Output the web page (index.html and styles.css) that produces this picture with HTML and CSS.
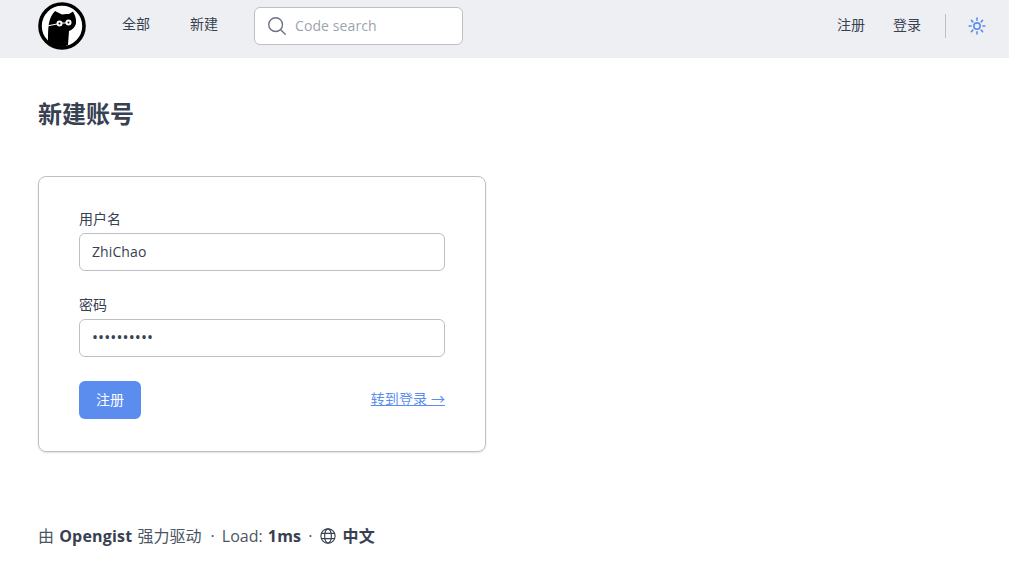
FILE: index.html
```html
<!DOCTYPE html>
<html lang="zh">
<head>
<meta charset="utf-8">
<title>新建账号</title>
<link rel="stylesheet" href="styles.css">
</head>
<body>
<header class="topbar">
  <div class="topbar-left">
    <a class="logo" href="#">
      <svg viewBox="0 0 48 48" width="48" height="48">
        <circle cx="24" cy="24" r="22" fill="#fff" stroke="#000" stroke-width="3.600"/>
        <path d="M10 41 C10 34 10 26 11 21 C12 16 14 12 17 9 L24 12.500 C27 12 30 12 31 12 L35 9.500 C37 13 38.500 17 38 21 C37.500 25 34 28 31 29 L30 43 C24 46 15 45 10 41 Z" fill="#000"/>
        <path d="M9 24 L19 22 M24 21 L28 21" stroke="#fff" stroke-width="1.200" fill="none"/>
        <circle cx="21.500" cy="21.500" r="3" fill="#fff"/>
        <circle cx="30.500" cy="20.500" r="3" fill="#fff"/>
        <circle cx="21.500" cy="21.500" r="1" fill="#000"/>
        <circle cx="30.500" cy="20.500" r="1" fill="#000"/>
      </svg>
    </a>
    <nav class="nav">
      <a href="#">全部</a>
      <a href="#">新建</a>
    </nav>
    <label class="search">
      <svg class="search-icon" viewBox="0 0 24 24" width="22" height="22" fill="none" stroke="#6b7280" stroke-width="1.500" stroke-linecap="round"><circle cx="10.500" cy="10.500" r="7.500"/><path d="M16 16 L21 21"/></svg>
      <input type="text" placeholder="Code search">
    </label>
  </div>
  <div class="topbar-right">
    <a href="#">注册</a>
    <a href="#">登录</a>
    <span class="divider"></span>
    <svg class="sun" viewBox="0 0 24 24" width="20" height="20" fill="none" stroke="#5b8def" stroke-width="1.900" stroke-linecap="round"><circle cx="12" cy="12" r="3.800"/><path d="M12 2.500v2.500M12 19v2.500M2.500 12H5M19 12h2.500M5.300 5.300L7 7M17 17l1.700 1.700M5.300 18.700L7 17M17 7l1.700-1.700"/></svg>
  </div>
</header>
<main class="page">
  <h1 class="title">新建账号</h1>
  <form class="card">
    <div class="field">
      <label class="field-label">用户名</label>
      <input class="field-input" type="text" value="ZhiChao">
    </div>
    <div class="field field-last">
      <label class="field-label">密码</label>
      <input class="field-input field-password" type="password" value="1234567890">
    </div>
    <div class="actions">
      <button class="btn" type="button">注册</button>
      <a class="link" href="#">转到登录 →</a>
    </div>
  </form>
</main>
<footer class="footer">
  <span>由 <b>Opengist</b> 强力驱动</span>
  <span class="dot">·</span>
  <span>Load: <b>1ms</b></span>
  <span class="dot dot-second">·</span>
  <svg class="globe" viewBox="0 0 24 24" width="18" height="18" fill="none" stroke="#374151" stroke-width="1.500"><circle cx="12" cy="12" r="9.500"/><ellipse cx="12" cy="12" rx="4.500" ry="9.500"/><path d="M3.200 8.500h17.600M3.200 15.500h17.600"/></svg>
  <b>中文</b>
</footer>
</body>
</html>
```
FILE: styles.css
```css
* { box-sizing: border-box; }
html, body { margin: 0; padding: 0; }
body {
  font-family: "Open Sans", "Noto Sans CJK SC", sans-serif;
  color: #374151;
  background: #fff;
}
a { color: inherit; text-decoration: none; }
.topbar {
  height: 58px;
  background: #eeeff2;
  display: flex;
  justify-content: space-between;
  align-items: flex-start;
  padding: 0 22px 0 38px;
}
.topbar-left { display: flex; align-items: flex-start; }
.logo { display: flex; margin-top: 2px; }
.nav { display: flex; gap: 40px; margin: 14px 0 0 36px; font-size: 14px; line-height: 20px; color: #374151; }
.search {
  display: flex;
  align-items: center;
  gap: 7px;
  width: 209px;
  height: 38px;
  margin: 7px 0 0 36px;
  padding-left: 11px;
  background: #fff;
  border: 1px solid #bdbfc7;
  border-radius: 6px;
}
.search input {
  border: 0;
  outline: 0;
  flex: 1;
  min-width: 0;
  font: 14px "Open Sans", sans-serif;
  letter-spacing: 0.1px;
  color: #374151;
  padding: 0 0 2px;
  background: transparent;
}
.search input::placeholder { color: #9ca3af; opacity: 1; }
.topbar-right {
  display: flex;
  align-items: flex-start;
  gap: 28px;
  height: 24px;
  margin-top: 14px;
  font-size: 14px;
  line-height: 22px;
  color: #374151;
}
.divider { width: 1px; height: 24px; background: #bdbfc7; margin-left: -4px; margin-right: -7px; }
.sun { display: block; margin-top: 2px; }
.page { padding: 0 38px; }
.title {
  margin: 0;
  padding-top: 39px;
  font-size: 24px;
  line-height: 34px;
  font-weight: 700;
  color: #374151;
}
.card {
  width: 448px;
  height: 276px;
  margin-top: 45px;
  padding: 33px 40px 0;
  border: 1px solid #bdbfc7;
  border-radius: 8px;
  box-shadow: 0 1px 2px rgba(0, 0, 0, 0.12);
}
.field { margin-bottom: 25px; }
.field-last { margin-bottom: 24px; }
.field-label { display: block; font-size: 14px; line-height: 18px; height: 23px; color: #374151; }
.field-input {
  display: block;
  width: 366px;
  height: 38px;
  padding: 0 12px 2px;
  font: 14px "Open Sans", sans-serif;
  letter-spacing: 0.1px;
  color: #374151;
  border: 1px solid #bdbfc7;
  border-radius: 6px;
  outline: 0;
  background: #fff;
}
.field-password { font-size: 16px; letter-spacing: 0.1px; }
.actions { display: flex; justify-content: space-between; align-items: center; width: 366px; }
.btn {
  width: 62px;
  height: 38px;
  border: 0;
  border-radius: 6px;
  background: #5b8def;
  color: #fff;
  font: 14px "Open Sans", "Noto Sans CJK SC", sans-serif;
  padding: 0 0 2px;
}
.link { font-size: 14px; letter-spacing: 0.1px; color: #5b8def; text-decoration: underline; margin-bottom: 4px; }
.footer {
  margin: 72px 0 0 38px;
  display: flex;
  align-items: center;
  font-size: 16px;
  line-height: 24px;
  color: #4b5563;
  white-space: pre;
}
.footer b { font-weight: 700; color: #374151; letter-spacing: 0.2px; }
.footer span b { margin: 0 1px; }
.dot { margin: 0 7px 0 9px; }
.dot-second { margin: 0 7px 0 6px; }
.globe { margin: 0 5px 0 0; }
```
